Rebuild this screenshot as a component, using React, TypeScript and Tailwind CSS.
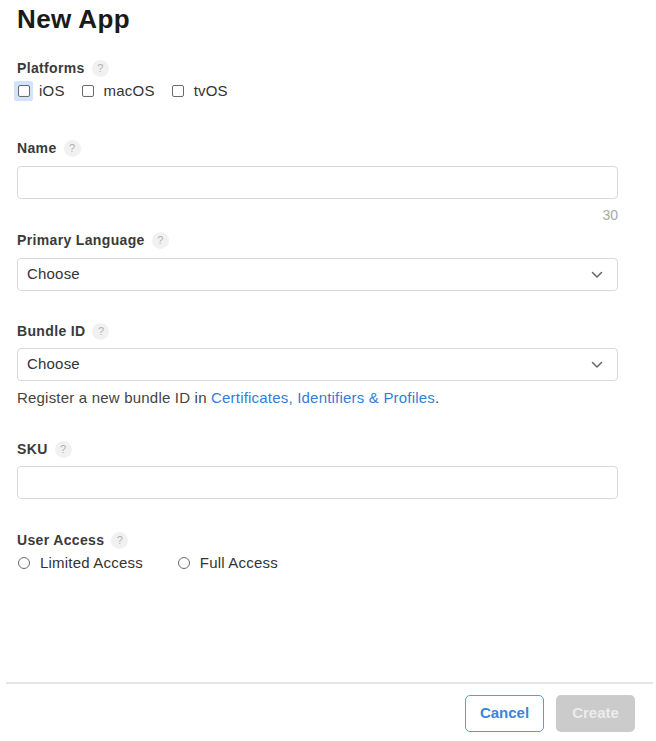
import React from 'react';

const Help: React.FC = () => (
  <span className="ml-[7px] inline-flex h-[17px] w-[17px] items-center justify-center rounded-full bg-[#f1f1f1] text-[11px] font-normal tracking-normal text-[#b0b0b0]">
    ?
  </span>
);

const Label: React.FC<{ text: string; className?: string }> = ({ text, className = '' }) => (
  <div className={`flex h-5 items-center text-[14px] font-semibold tracking-[0.35px] text-[#3a3a3a] ${className}`}>
    {text}
    <Help />
  </div>
);

const Check: React.FC<{ label: string; focused?: boolean; className?: string }> = ({
  label,
  focused,
  className = '',
}) => (
  <div className={`flex items-center ${className}`}>
    <span
      className={`flex h-[20px] w-[19px] items-center justify-center rounded-[2px] ${
        focused ? 'bg-[#d2e4fb]' : ''
      }`}
    >
      <span className="h-[12px] w-[12px] rounded-[2px] border border-[#6b6b6b] bg-white" />
    </span>
    <span className="ml-[6px] text-[15px] tracking-[0.2px] text-[#333]">{label}</span>
  </div>
);

const Radio: React.FC<{ label: string; className?: string }> = ({ label, className = '' }) => (
  <div className={`flex items-center ${className}`}>
    <span className="ml-[1px] h-[12px] w-[12px] rounded-full border border-[#6b6b6b] bg-white" />
    <span className="ml-[10px] text-[15px] tracking-[0.2px] text-[#333]">{label}</span>
  </div>
);

const Select: React.FC<{ className?: string }> = ({ className = '' }) => (
  <div
    className={`flex h-[33px] items-center justify-between rounded-[4px] border border-[#d9d9d9] pl-[9px] pr-[14px] text-[15px] tracking-[0.2px] text-[#333] ${className}`}
  >
    <span>Choose</span>
    <svg width="12" height="8" viewBox="0 0 12 8" fill="none">
      <path d="M1.5 1.5 6 6l4.5-4.5" stroke="#666" strokeWidth="1.5" strokeLinecap="round" strokeLinejoin="round" />
    </svg>
  </div>
);

const Input: React.FC<{ className?: string }> = ({ className = '' }) => (
  <div className={`h-[33px] rounded-[4px] border border-[#d9d9d9] bg-white ${className}`} />
);

export default function App() {
  return (
    <div
      className="flex h-[741px] w-[656px] flex-col bg-white"
      style={{ fontFamily: '"Liberation Sans", Arial, sans-serif' }}
    >
      <div className="flex flex-col pl-[17px] pr-[38px]">
        <h1 className="mt-[3px] h-[32px] text-[26px] leading-[32px] font-bold tracking-[0.4px] text-[#1a1a1a]">New App</h1>

        <Label text="Platforms" className="mt-[23px]" />
        <div className="mt-[3px] flex h-5 items-center">
          <Check label="iOS" focused className="-ml-[3px]" />
          <Check label="macOS" className="ml-[14px]" />
          <Check label="tvOS" className="ml-[14px]" />
        </div>

        <Label text="Name" className="mt-[37px]" />
        <Input className="mt-[8px]" />
        <div className="mt-[8px] h-4 text-right text-[14px] leading-4 text-[#a8a8a8]">30</div>

        <Label text="Primary Language" className="mt-[7px]" />
        <Select className="mt-[8px]" />

        <Label text="Bundle ID" className="mt-[30px]" />
        <Select className="mt-[7px]" />
        <div className="mt-[7px] flex h-5 items-center text-[15px] tracking-[0.2px] text-[#444]">
          Register a new bundle ID in&nbsp;
          <a className="text-[#2f80d9]">Certificates, Identifiers &amp; Profiles</a>.
        </div>

        <Label text="SKU" className="mt-[31px]" />
        <Input className="mt-[7px]" />

        <Label text="User Access" className="mt-[31px]" />
        <div className="mt-[3px] flex h-5 items-center">
          <Radio label="Limited Access" />
          <Radio label="Full Access" className="ml-[34px]" />
        </div>
      </div>

      <div className="flex-1" />

      <div className="ml-[6px] mr-[3px] border-t-2 border-[#e6e6e6]" />
      <div className="mt-[11px] mb-[9px] flex justify-end gap-[12px] pr-[21px]">
        <button className="h-[37px] w-[79px] rounded-[5px] border-[1.5px] border-[#5a9ae6] bg-white text-[15px] font-semibold text-[#3a86dc]">
          Cancel
        </button>
        <button className="h-[37px] w-[79px] rounded-[5px] bg-[#cbcbcb] text-[15px] font-semibold text-[#ececec]">
          Create
        </button>
      </div>
    </div>
  );
}
